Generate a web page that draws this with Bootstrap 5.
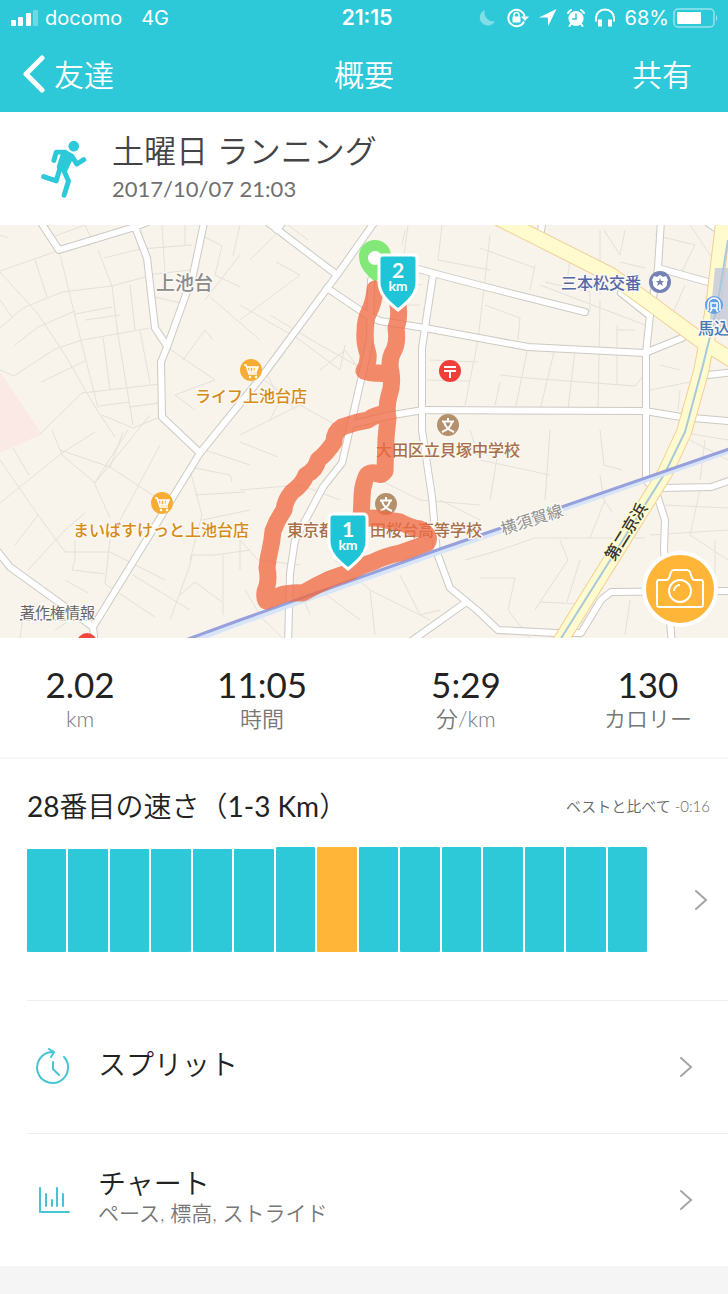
<!DOCTYPE html>
<html lang="ja">
<head>
<meta charset="utf-8">
<meta name="viewport" content="width=device-width, initial-scale=1">
<title>概要</title>
<link href="https://cdn.jsdelivr.net/npm/bootstrap@5.3.0/dist/css/bootstrap.min.css" rel="stylesheet">
<style>
  :root { --teal: #2dc9d9; --amber: #ffb537; --ink: #222; --muted: #777; --rule: #f3f3f3; }
  body { font-family: Lato, "Noto Sans CJK JP", sans-serif; font-weight: 350; color: var(--ink); background: #f5f5f5; }
  svg { display: block; flex: none; }
  a { color: inherit; text-decoration: none; }
  .top { background: var(--teal); color: #fff; }
  .status { height: 36px; padding: 0 9px; font: 400 20px/36px Inter, sans-serif; }
  .clock { font-weight: 600; font-size: 21px; padding-left: 6px; }
  .carrier { margin-left: 6px; margin-right: 19px; }
  .side { flex: 1 1 0; }
  .bar-nav { height: 76px; font-size: 30px; line-height: 40px; padding: 0 36px; }
  .bar-nav h1 { font-size: 30px; line-height: 40px; font-weight: 350; }
  .bar-nav .back { margin-left: -14px; }
  .bar-nav button { background: none; border: 0; padding: 0; color: inherit; font-weight: 350; }
  .activity { height: 113px; padding: 0 24px 0 40px; gap: 24px; }
  .activity h2 { font-size: 32px; line-height: 40px; font-weight: 350; color: #444; }
  .stamp { font-size: 22px; line-height: 36px; font-weight: 400; color: #707070; }
  .map svg.canvas { width: 100%; height: auto; }
  .map text { font-family: "Noto Sans CJK JP", sans-serif; font-weight: 500; font-size: 16px; paint-order: stroke; stroke: #fbf8f2; stroke-width: 3px; stroke-linejoin: round; }
  .map .pin text { font-family: Lato, sans-serif; font-weight: 700; fill: #fff; stroke: none; text-anchor: middle; }
  .camera { position: absolute; right: 10px; bottom: 11px; width: 76px; height: 76px; border: 4px solid #fff; border-radius: 50%; background: var(--amber); padding: 0; }
  .stats { display: grid; grid-template-columns: 22fr 28fr 28fr 22fr; padding: 25px 0 24px; border-bottom: 2px solid #f8f8f8; }
  .stats dd { font-size: 35px; line-height: 42px; font-weight: 400; color: var(--ink); }
  .stats dt { font-size: 22px; line-height: 28px; font-weight: 350; color: var(--muted); }
  .pace { padding: 27px 18px 48px 27px; }
  .pace h2 { font-size: 28px; line-height: 40px; font-weight: 350; }
  .pace h2 b { font-weight: 400; }
  .versus { font-size: 15px; color: #666; }
  .chart { padding-right: 63px; margin-top: 21px; height: 105px; }
  .chart i { flex: 1 1 0; background: var(--teal); border-radius: 1px; }
  .chart i.now { background: var(--amber); }
  .pace .go { position: absolute; right: 2px; top: 50%; transform: translateY(-50%); }
  .rows { padding-left: 27px; }
  .rows a { display: flex; align-items: center; height: 133px; border-top: 1px solid #eee; padding: 0 35px 0 8px; }
  .rows .label { margin-left: 27px; padding-bottom: 6px; flex: 1; font-size: 28px; line-height: 32px; }
  .rows .note { font-size: 21px; line-height: 28px; color: var(--muted); }
</style>
</head>
<body>
<header class="top">
  <div class="status d-flex align-items-center">
    <div class="side d-flex align-items-center">
      <svg width="30" height="18" viewBox="0 0 30 18" fill="#fff"><rect x="2" y="11" width="5" height="6" rx="1"/><rect x="9" y="8" width="5" height="9" rx="1"/><rect x="17" y="4" width="5" height="13" rx="1"/><rect x="24" y="1" width="5" height="16" rx="1" opacity=".3"/></svg>
      <span class="carrier">docomo</span><span>4G</span>
    </div>
    <span class="clock">21:15</span>
    <div class="side d-flex align-items-center justify-content-end">
      <svg class="me-2" width="20" height="20" viewBox="0 0 20 20"><path d="M6 2a8 8 0 1 0 10 11A8.500 8.500 0 0 1 6 2z" fill="#fff" opacity=".4"/></svg>
      <svg class="me-2" width="24" height="20" viewBox="0 0 24 20"><path d="M17 13.500a8.200 8.200 0 1 1 .6-5" fill="none" stroke="#fff" stroke-width="2"/><path d="M14 8.500h8L18 13z" fill="#fff"/><rect x="5.500" y="8.500" width="8" height="6" rx="1" fill="#fff"/><path d="M7 9V7a2.500 2.500 0 0 1 5 0v2" fill="none" stroke="#fff" stroke-width="1.500"/></svg>
      <svg class="me-2" width="20" height="20" viewBox="0 0 20 20"><path d="M17.500 1 0 9.500h8.800l.4 8.500z" fill="#fff"/></svg>
      <svg class="me-2" width="20" height="20" viewBox="0 0 20 20"><circle cx="9" cy="10.500" r="7.600" fill="#fff"/><path d="M9 5.500v5.500H5" fill="none" stroke="#2dc9d9" stroke-width="1.500"/><path d="M1 5A9 9 0 0 1 4 2M17 5A9 9 0 0 0 14 2M4 16l-1.500 2M14 16l1.500 2" stroke="#fff" stroke-width="2" stroke-linecap="round" fill="none"/></svg>
      <svg class="me-2" width="22" height="20" viewBox="0 0 22 20"><path d="M1 13.500V10a9 8.500 0 0 1 18 0v3.500" fill="none" stroke="#fff" stroke-width="2"/><rect x="3" y="11.500" width="4" height="7" fill="#fff"/><rect x="13" y="11.500" width="4" height="7" fill="#fff"/></svg>
      <span class="me-1">68%</span>
      <svg width="46" height="20" viewBox="0 0 46 20"><rect x="1" y="1" width="40" height="18" rx="4" fill="none" stroke="#fff" stroke-width="1.500" opacity=".5"/><rect x="4" y="4" width="24" height="12" rx="1" fill="#fff"/><path d="M43 6.500q2.500 3.500 0 7z" fill="#fff" opacity=".5"/></svg>
    </div>
  </div>
  <nav class="bar-nav d-flex align-items-center">
    <div class="side d-flex"><a href="#" class="back d-flex align-items-center"><svg width="24" height="38" viewBox="0 0 24 38"><path d="M20 3 4 19l16 16" fill="none" stroke="#fff" stroke-width="5" stroke-linecap="round" stroke-linejoin="round"/></svg><span class="ms-2">友達</span></a></div>
    <h1 class="m-0">概要</h1>
    <div class="side d-flex justify-content-end"><button type="button">共有</button></div>
  </nav>
</header>

<main class="bg-white">
  <section class="activity d-flex align-items-center">
    <svg width="48" height="60" viewBox="118 420 145 180" fill="none" stroke="#2dc9d9" stroke-width="15" stroke-linecap="round" stroke-linejoin="round"><circle cx="220" cy="441" r="16" fill="#2dc9d9" stroke="none"/><path d="M160 484l7-25h26l22 13 14 23 21-13"/><path d="M190 460l22 12-18 40-18-8z" fill="#2dc9d9"/><path d="M180 502l-13 44-38-13M188 510l16 36-13 43"/></svg>
    <div><h2 class="m-0">土曜日 ランニング</h2><div class="stamp">2017/10/07 21:03</div></div>
  </section>

  <section class="map position-relative overflow-hidden" aria-label="ルート">
    <svg class="canvas" viewBox="0 225 728 413">
      <defs>
        <g id="streets" fill="none" stroke-linejoin="round" stroke-linecap="round">
          <path d="M38 218 59 250 135 227 150 221M135 227 147 258 155 328 167 346M205 218 193 275 167 347 161 362 162 417 200 453"/>
          <path d="M376 220 337 275 263 375 200 453 157 523 93 627 95 645M266 221 337 275M283 222 277 230"/>
          <path d="M327 288 367 315 380 321 425 328 490 340 528 347 645 353 682 338M400 264 440 275 490 288 585 312"/>
          <path d="M433 275 425 328 422 348 422 430 432 497 437 553 450 588 478 611 498 630 556 633 581 633 601 600 611 592 728 591M465 603 410 642"/>
          <path d="M353 424 387 416 423 410 645 411 681 417 728 421M661 220 658 268 650 315 646 353 646 480 652 487M658 268 708 282M621 293 650 316M543 220 540 236"/>
          <path d="M661 488 711 487 735 479M658 498 665 520 664 550 672 645M371 280 370 340 353 415 342 463 323 487 295 540 290 573 288 645M-5 548 10 567 93 627M708 375 735 372M704 220 718 230"/>
        </g>
        <g id="avenues" fill="none" stroke-linejoin="round"><path d="M498 218 611 275 650 303 700 340 735 362"/><path d="M724 215 713 308 701 372 684 432 665 473 558 645"/></g>
      </defs>
      <rect y="225" width="728" height="413" fill="#f8f4ec"/>
      <path d="M0 372 42 434 0 453z" fill="#fbe9e6"/>
      <g fill="none" stroke="#e4e0da">
        <path d="M0 271 60 250 90 245M0 272 38 314 67 358 95 407 115 437M0 328 23 308 62 292 112 286 145 277M15 345 38 327 75 311M0 370 14 376 55 349 82 340 150 328M59 250 82 345 98 408M98 250 112 286 118 335 133 425M35 260 47 297M75 314 112 307M130 285 135 330M103 337 110 390M140 331 150 383M41 382 85 361M82 393 160 384M99 406 129 402M129 407 159 403M102 415 133 428 160 417M40 434 82 393M55 236 85 225 92 240M104 258 140 249 192 245M147 275 190 270M155 297 180 303M162 225 165 273M185 225V245M205 237 222 246 215 275 240 287M205 300 240 255M210 297 260 340M240 225 233 256M183 360 205 330 213 340M167 347 215 380 175 395 195 410M0 300 12 317M0 235 8 238"/>
        <path d="M0 503 62 453 95 432M0 460 38 515 65 552 110 552 165 580M13 448 29 475M52 430 62 455 94 482 110 518M94 484 128 430M95 483 150 415M60 450 110 467 160 500M120 520 160 445M110 467 123 432M28 570 65 530 85 513M15 545 38 515M75 540V560L72 570 105 574M110 540 105 584 155 617M133 575 190 610M65 580 88 593M190 470 202 515 190 560M195 495 245 492M202 520 250 510M190 467 230 475 232 482M180 595 195 582 222 602M170 620 190 565 192 555 215 555 250 550M223 555V615M240 540V570M85 320 120 315M205 450 250 465M240 442 278 457M20 638 25 605M55 630 85 610"/>
        <path d="M240 320 300 275 276 262M288 225 308 240M240 305 300 340 340 370 345 345M270 315 320 345 365 370M320 370 345 350 360 370M250 370 278 390 295 410M240 435 300 405 345 430M265 370 280 400 270 420M250 260 275 235M405 230 402 245M408 225 404 255M442 225 438 260 490 270M400 280 422 285M390 305 420 305M490 235 478 340 465 405M430 360 478 362M427 380 470 381M422 310 428 305M500 375 528 378 635 386 648 370M528 347 515 410M555 348 540 410M575 350 568 410M500 382 495 405M600 300 598 410M617 325V385M617 330H635M545 282 590 292 590 312M535 265 530 290M570 260 567 282M540 285 645 325M480 248 535 268M485 305 520 318 518 340M600 295V230M604 230 620 255 625 230M620 262 645 268M655 235 695 245 680 275M690 225 715 262M670 320 685 285M650 390 690 382M680 390 678 410M680 370 660 365"/>
        <path d="M240 490 300 485 340 500M240 540 258 560 300 565M245 590 262 618 285 640M300 590 310 615M340 530 400 535 430 540M335 560 370 590 375 635M370 590 430 620M400 575 420 615 440 610M470 430 480 460 550 475M465 560 500 550 535 538H645M550 430 545 500M500 440 490 500M600 430 604 465 622 470M600 475 604 500 612 512M590 538 605 500M480 578 515 578 508 610 535 645M535 610 540 602 568 560 560 540M567 602 580 560M540 602 600 605M630 600 625 635M650 535 728 530M665 505 728 508M700 480 705 440M690 440 728 460M680 432 728 440M700 490 690 535 728 560M715 540V590M440 500 480 520M300 520 345 528M320 590 360 620M380 480 420 500 480 505"/>
      </g>
      <use href="#streets" stroke="#cdc9c4" stroke-width="8"/>
      <use href="#streets" stroke="#fff" stroke-width="6"/>
      <use href="#avenues" stroke="#f3cf93" stroke-width="16"/>
      <use href="#avenues" stroke="#fffbce" stroke-width="14"/>
      <path d="M715 268h14v60h-20z" fill="#c4c8dc" opacity=".8"/>
      <path d="M728 240 717 308 703 365 685 432 665 473 560 640" fill="none" stroke="#a8c8dc" stroke-width="2"/>
      <path d="M190 642 240 623 440 552 735 449" fill="none" stroke="#d8e4f8" stroke-width="5"/>
      <path d="M180 642 240 620 440 549 735 447" fill="none" stroke="#96a0dc" stroke-width="3"/>

      <text x="156" y="290" fill="#8c8c8c" style="font-size:19px">上池台</text>
      <text x="195" y="402" fill="#d68b16">ライフ上池台店</text>
      <text x="73" y="536" fill="#d68b16">まいばすけっと上池台店</text>
      <text x="376" y="456" fill="#a8704a">大田区立貝塚中学校</text>
      <text x="287" y="536" fill="#a8704a">東京都</text>
      <text x="370" y="536" fill="#a8704a">田桜台高等学校</text>
      <text x="561" y="289" fill="#5468a8">三本松交番</text>
      <text x="698" y="334" fill="#4678b8">馬込</text>
      <text transform="translate(503 535) rotate(-18)" fill="#909090" style="font-weight:400">横須賀線</text>
      <text transform="translate(614 562) rotate(-58)" fill="#333" style="stroke:#fffbce">第二京浜</text>

      <g fill="#f7ad35"><circle cx="251" cy="370" r="11"/><circle cx="162" cy="503" r="11"/></g>
      <g fill="none" stroke="#fff" stroke-width="1.500"><path d="M244 365h2l3 9h8M247 367h11l-2 5h-8M250 367v5M253 367v5M256 367l-1 5"/><path d="M250 377h.1M256 377h.1" stroke-width="2.500" stroke-linecap="round"/><path d="M155 498h2l3 9h8M158 500h11l-2 5h-8M161 500v5M164 500v5M167 500l-1 5"/><path d="M161 510h.1M167 510h.1" stroke-width="2.500" stroke-linecap="round"/></g>
      <circle cx="450" cy="371" r="11" fill="#f03f3a"/><path d="M444 367h12M444 371h12M450 371v7" stroke="#fff" stroke-width="2" fill="none"/>
      <g fill="#b4906c"><circle cx="448" cy="425" r="11"/><circle cx="386" cy="504" r="11"/></g>
      <g fill="none" stroke="#fff" stroke-width="2"><path d="M448 418v3M442 421.500h12M444 422q2 7 10 10M452 422q-2 7-10 10"/><path d="M386 497v3M380 500.500h12M382 501q2 7 10 10M390 501q-2 7-10 10"/></g>
      <circle cx="660" cy="282" r="11" fill="#7482b4"/><path d="M654 276l3 1 3-2 3 2 3-1 2 4-1 2q1 6-7 8-8-2-7-8l-1-2z" fill="#fff"/><path d="M660 278l1 3h3l-2 2 1 3-3-2-3 2 1-3-2-2h3z" fill="#7482b4"/>
      <circle cx="714" cy="305" r="9" fill="#64a0e8"/><path d="M708 311v-7a6 6 0 0 1 12 0v7M711 303h6v5h-6zM712 309l-2 3M716 309l2 3" fill="none" stroke="#fff" stroke-width="1.500"/>
      <circle cx="87" cy="643" r="10" fill="#f0483f"/>

      <path d="M375 240c-9 0-16 7-16 16 0 12 8 19 16 26 8-7 16-14 16-26 0-9-7-16-16-16z" fill="#82e878"/><circle cx="375" cy="258" r="7" fill="#fff"/>
      <path d="M375 289Q374 302 369 312 365 320 365 332 364 342 368 354 369 362 364 371 372 374 378 373 385 374 391 374M398 305Q400 318 396 328 398 342 394 350 388 360 391 372 393 385 389 396 386 406 388 418 387 428 386 438L385 471Q381 477 376 473 367 471 365 480 362 488 362 498L361 520Q372 516 386 520L400 522Q412 528 420 529 432 536 427 543 415 548 400 553 385 556 373 562 360 566 350 572L330 579Q315 586 303 593 294 592 284 594L266 601Q263 594 267 586 269 578 267 568 268 558 270 550 272 542 273 531 277 520 284 510 285 500 292 492 303 484 306 475 316 470 318 460 327 453 334 442 334 432 342 427 355 422 368 420 374 415 387 413" fill="none" stroke="#f06a42" stroke-opacity=".77" stroke-width="17" stroke-linejoin="round" stroke-linecap="round"/>

      <g class="pin"><path d="M383 255h30q4 0 4 4v23c0 12-9 20-19 28-10-8-19-16-19-28v-23q0-4 4-4z" fill="#1fc5d6" stroke="#fff" stroke-width="3"/><text x="398" y="278" style="font-size:21px">2</text><text x="398" y="291" style="font-size:14px">km</text></g>
      <g class="pin"><path d="M333 514h30q4 0 4 4v23c0 12-9 20-19 28-10-8-19-16-19-28v-23q0-4 4-4z" fill="#1fc5d6" stroke="#fff" stroke-width="3"/><text x="348" y="537" style="font-size:21px">1</text><text x="348" y="550" style="font-size:14px">km</text></g>
      <a href="#"><text x="20" y="618" fill="#666" style="font-size:15px;font-weight:400;text-decoration:underline;text-decoration-skip-ink:none">著作権情報</text></a>
    </svg>
    <button class="camera" type="button" aria-label="写真を追加">
      <svg class="m-auto" width="50" height="42" viewBox="0 0 50 42" fill="none" stroke="#fff" stroke-width="2" stroke-linejoin="round"><path d="M4 12h7q2 0 3-2l2-6q1-2 3-2h13q2 0 3 2l2 6q1 2 3 2h6q2 0 2 2v23q0 2-2 2H4q-2 0-2-2V14q0-2 2-2z"/><circle cx="25" cy="23" r="11"/><path d="M19 23a6 6 0 0 1 6-6"/></svg>
    </button>
  </section>

  <dl class="stats m-0 text-center">
    <div class="d-flex flex-column-reverse"><dt>km</dt><dd class="m-0">2.02</dd></div>
    <div class="d-flex flex-column-reverse"><dt>時間</dt><dd class="m-0">11:05</dd></div>
    <div class="d-flex flex-column-reverse"><dt>分/km</dt><dd class="m-0">5:29</dd></div>
    <div class="d-flex flex-column-reverse"><dt>カロリー</dt><dd class="m-0">130</dd></div>
  </dl>

  <section class="pace">
    <div class="d-flex align-items-center justify-content-between">
      <h2 class="m-0"><b>28</b>番目の速さ（<b>1-3 Km</b>）</h2><span class="versus">ベストと比べて -0:16</span>
    </div>
    <div class="position-relative">
      <div class="chart d-flex align-items-end">
        <div class="d-flex align-items-end w-100 h-100" style="gap:2px">
          <i style="height:98%"></i><i style="height:98%"></i><i style="height:98%"></i><i style="height:98%"></i><i style="height:98%"></i><i style="height:98%"></i><i style="height:100%"></i><i class="now" style="height:100%"></i><i style="height:100%"></i><i style="height:100%"></i><i style="height:100%"></i><i style="height:100%"></i><i style="height:100%"></i><i style="height:100%"></i><i style="height:100%"></i>
        </div>
      </div>
      <a href="#" class="go" aria-label="詳細"><svg width="14" height="22" viewBox="0 0 14 22"><path d="M2 2l10 9-10 9" fill="none" stroke="#a5a5a5" stroke-width="2" stroke-linecap="round"/></svg></a>
    </div>
  </section>

  <nav class="rows">
    <a href="#">
      <svg width="36" height="38" viewBox="0 0 36 38" fill="none" stroke="#45c5d3" stroke-width="2" stroke-linecap="round" stroke-linejoin="round"><path d="M29 9a15.500 15.500 0 1 1-12-5M14 1l5 3-3 5M18 14v7l6 6"/></svg>
      <span class="label">スプリット</span>
      <svg width="14" height="22" viewBox="0 0 14 22"><path d="M2 2l10 9-10 9" fill="none" stroke="#a5a5a5" stroke-width="2" stroke-linecap="round"/></svg>
    </a>
    <a href="#">
      <svg width="36" height="28" viewBox="0 0 36 28" fill="none" stroke="#45c5d3" stroke-width="2" stroke-linecap="round" stroke-linejoin="round"><path d="M5 2v24h29M11 8v12M17 14v6M22 2v18M28 8v12"/></svg>
      <span class="label">チャート<span class="note d-block">ペース, 標高, ストライド</span></span>
      <svg width="14" height="22" viewBox="0 0 14 22"><path d="M2 2l10 9-10 9" fill="none" stroke="#a5a5a5" stroke-width="2" stroke-linecap="round"/></svg>
    </a>
  </nav>
</main>
<script src="https://cdn.jsdelivr.net/npm/bootstrap@5.3.0/dist/js/bootstrap.bundle.min.js"></script>
</body>
</html>
